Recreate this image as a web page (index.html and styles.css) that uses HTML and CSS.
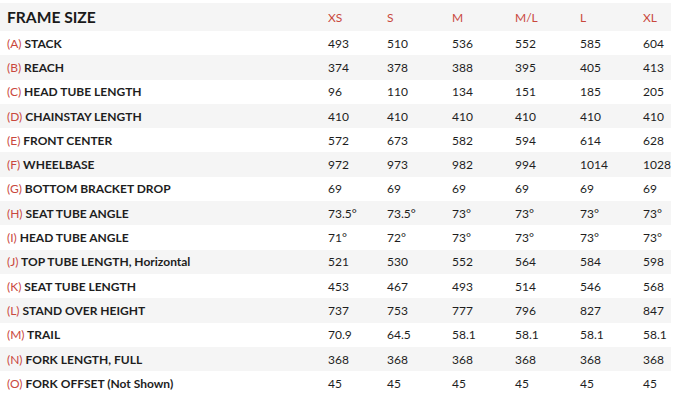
FILE: index.html
```html
<!DOCTYPE html>
<html>
<head>
<meta charset="utf-8">
<link rel="stylesheet" href="styles.css">
</head>
<body>
<div class="geo">
  <div class="row head">
    <div class="label">FRAME SIZE</div>
    <div class="size">XS</div><div class="size">S</div><div class="size">M</div><div class="size">M/L</div><div class="size">L</div><div class="size">XL</div>
  </div>
  <div class="row"><div class="label"><span class="key">(A)</span> STACK</div><div>493</div><div>510</div><div>536</div><div>552</div><div>585</div><div>604</div></div>
  <div class="row"><div class="label"><span class="key">(B)</span> REACH</div><div>374</div><div>378</div><div>388</div><div>395</div><div>405</div><div>413</div></div>
  <div class="row"><div class="label"><span class="key">(C)</span> HEAD TUBE LENGTH</div><div>96</div><div>110</div><div>134</div><div>151</div><div>185</div><div>205</div></div>
  <div class="row"><div class="label"><span class="key">(D)</span> CHAINSTAY LENGTH</div><div>410</div><div>410</div><div>410</div><div>410</div><div>410</div><div>410</div></div>
  <div class="row"><div class="label"><span class="key">(E)</span> FRONT CENTER</div><div>572</div><div>673</div><div>582</div><div>594</div><div>614</div><div>628</div></div>
  <div class="row"><div class="label"><span class="key">(F)</span> WHEELBASE</div><div>972</div><div>973</div><div>982</div><div>994</div><div>1014</div><div>1028</div></div>
  <div class="row"><div class="label"><span class="key">(G)</span> BOTTOM BRACKET DROP</div><div>69</div><div>69</div><div>69</div><div>69</div><div>69</div><div>69</div></div>
  <div class="row"><div class="label"><span class="key">(H)</span> SEAT TUBE ANGLE</div><div>73.5°</div><div>73.5°</div><div>73°</div><div>73°</div><div>73°</div><div>73°</div></div>
  <div class="row"><div class="label"><span class="key">(I)</span> HEAD TUBE ANGLE</div><div>71°</div><div>72°</div><div>73°</div><div>73°</div><div>73°</div><div>73°</div></div>
  <div class="row"><div class="label"><span class="key">(J)</span> TOP TUBE LENGTH, Horizontal</div><div>521</div><div>530</div><div>552</div><div>564</div><div>584</div><div>598</div></div>
  <div class="row"><div class="label"><span class="key">(K)</span> SEAT TUBE LENGTH</div><div>453</div><div>467</div><div>493</div><div>514</div><div>546</div><div>568</div></div>
  <div class="row"><div class="label"><span class="key">(L)</span> STAND OVER HEIGHT</div><div>737</div><div>753</div><div>777</div><div>796</div><div>827</div><div>847</div></div>
  <div class="row"><div class="label"><span class="key">(M)</span> TRAIL</div><div>70.9</div><div>64.5</div><div>58.1</div><div>58.1</div><div>58.1</div><div>58.1</div></div>
  <div class="row"><div class="label"><span class="key">(N)</span> FORK LENGTH, FULL</div><div>368</div><div>368</div><div>368</div><div>368</div><div>368</div><div>368</div></div>
  <div class="row"><div class="label"><span class="key">(O)</span> FORK OFFSET (Not Shown)</div><div>45</div><div>45</div><div>45</div><div>45</div><div>45</div><div>45</div></div>
</div>
</body>
</html>
```
FILE: styles.css
```css
html, body {
  margin: 0;
  padding: 0;
  background: #ffffff;
}
body {
  font-family: Lato, "Open Sans", sans-serif;
  color: #1e1e1e;
}
.geo {
  width: 671px;
  padding-top: 3px;
}
.row {
  display: grid;
  grid-template-columns: 328px 59px 65px 63px 65px 63px 28px;
  align-items: center;
  height: 24.3px;
  font-size: 12px;
}
.row:nth-child(odd) {
  background: #f5f5f5;
}
.row.head {
  height: 28px;
}
.label {
  padding-left: 7px;
  font-weight: 700;
}
.head .label {
  font-size: 15.6px;
  font-weight: 700;
  color: #1a1a1a;
}
.size {
  color: #c9483d;
}
.key {
  color: #c9483d;
  font-weight: 400;
}
```
